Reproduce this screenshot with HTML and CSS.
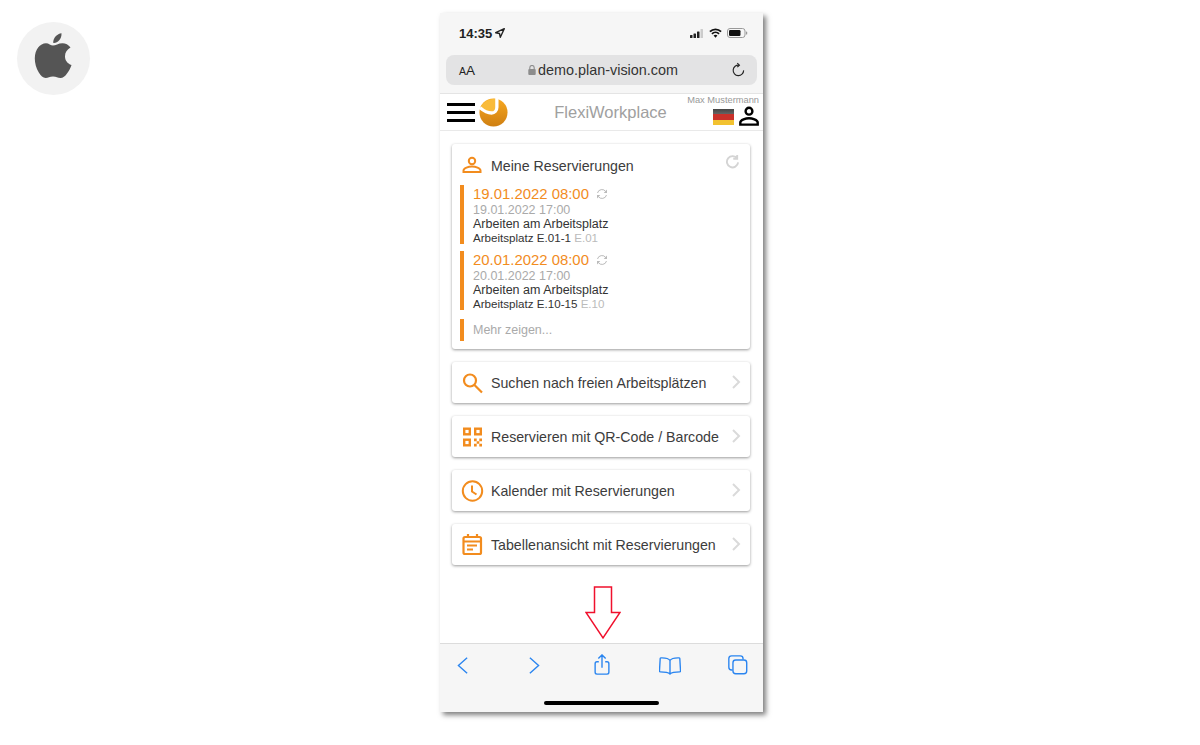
FILE: index.html
```html
<!DOCTYPE html>
<html lang="de">
<head>
  <meta charset="UTF-8">
  <title>FlexiWorkplace</title>
  <link rel="stylesheet" href="styles.css">
</head>
<body>

  <!-- Plattform-Logo links oben -->
  <div class="platform">
    <div class="platform-badge">
      <svg class="apple" viewBox="0 0 38 47">
        <path d="M27.500 1.200C27.700 4 26.800 6.500 25 8.500 23.500 10.200 21.500 11.300 19.300 11 19 8.500 20 6 21.700 4.200 23.200 2.600 25.500 1.500 27.500 1.200z"/>
        <path d="M19 13.500C21.500 13.500 24.500 11.200 28.500 11.200 31.500 11.200 34.500 12.600 36.500 15.500 33 17.600 31 20.500 31 24.200 31 28.400 33.300 31.400 37.500 33 36.500 36 35 39 33 41.500 31 44.300 29 46 26.500 46 23.500 46 22.500 44.500 19 44.500 15.500 44.500 14.300 46 11.700 46 9 46 6.800 43.500 4.800 40.500 2.200 36.500.8 31 .8 26.500.8 17.500 6 11.200 12 11.200 14.800 11.200 16.800 13.500 19 13.500z"/>
      </svg>
    </div>
  </div>

  <div class="phone">
    <!-- Safari oben -->
    <div class="browser-top">
      <div class="statusbar">
        <div class="status-time">
          14:35
          <svg class="status-arrow" viewBox="0 0 10 10"><path d="M9.300.7 5.300 9.300 4.500 5.500.7 4.700z"/></svg>
        </div>
        <div class="status-icons">
          <svg class="ic-signal" viewBox="0 0 14 9">
            <rect x="0" y="6" width="2.500" height="3" rx=".5"/>
            <rect x="3.500" y="4.500" width="2.500" height="4.500" rx=".5"/>
            <rect x="7" y="2.500" width="2.500" height="6.500" rx=".5"/>
            <rect class="off" x="10.500" y="0" width="2.500" height="9" rx=".5"/>
          </svg>
          <svg class="ic-wifi" viewBox="0 0 14 10">
            <path d="M1 3.600A8.500 8.500 0 0 1 13 3.600" />
            <path d="M3.200 5.900A5.400 5.400 0 0 1 10.800 5.900" />
            <path class="dot" d="M7 10 4.900 7.800a3 3 0 0 1 4.200 0z"/>
          </svg>
          <svg class="ic-battery" viewBox="0 0 21 10">
            <rect class="shell" x=".5" y=".5" width="17.500" height="9" rx="2.500"/>
            <rect x="2" y="2" width="11.500" height="6" rx="1.200"/>
            <rect class="cap" x="19" y="3.500" width="1.200" height="3" rx=".6"/>
          </svg>
        </div>
      </div>
      <div class="urlbar">
        <span class="url-aa"><small>A</small>A</span>
        <span class="url-host">
          <svg class="ic-lock" viewBox="0 0 8 10"><path d="M1.800 4V2.700a2.200 2.200 0 0 1 4.400 0V4" /><rect x=".3" y="4" width="7.400" height="6" rx="1"/></svg>
          demo.plan-vision.com
        </span>
        <svg class="ic-reload" viewBox="0 0 16 16">
          <path d="M8.600 2.800A5.600 5.600 0 1 0 13.500 8.400"/>
          <path d="M6.700.6 9 2.800 6.700 5"/>
        </svg>
      </div>
    </div>

    <!-- App-Kopfzeile -->
    <header class="appbar">
      <div class="burger"><span></span><span></span><span></span></div>
      <svg class="brand" viewBox="0 0 30 30">
        <defs>
          <linearGradient id="brandGrad" x1="0" y1="0" x2="0" y2="1">
            <stop offset="0" stop-color="#f7a81f"/>
            <stop offset="1" stop-color="#cf7f12"/>
          </linearGradient>
        </defs>
        <circle cx="15" cy="15" r="14.500" fill="url(#brandGrad)"/>
        <path d="M18.500.8V9.500C18.500 12.500 16 14.500 13.500 14.500 9 14.500 5 12 1.600 9.500 3.500 4.500 10 .2 18.500.8z" fill="#f9bb3a"/>
        <path d="M18.500 0V9.500C18.500 13 16 15.500 13 15.500 8.500 15.500 4.500 13 1 10" fill="none" stroke="#fff" stroke-width="3.400"/>
      </svg>
      <div class="appbar-title">FlexiWorkplace</div>
      <div class="appbar-user">
        <div class="user-name">Max Mustermann</div>
        <div class="user-icons">
          <div class="flag"></div>
          <svg class="ic-user" viewBox="0 0 20 20">
            <circle cx="10" cy="5.200" r="3.400"/>
            <path d="M1.300 18.600V16.500c0-2.900 5.800-4.300 8.700-4.300s8.700 1.400 8.700 4.300v2.100z"/>
          </svg>
        </div>
      </div>
    </header>

    <main class="content">
      <section class="card res-card">
        <div class="res-head">
          <svg class="card-icon ic-person" viewBox="0 0 24 24">
            <circle cx="12" cy="7" r="3.200"/>
            <path d="M3.500 18v-1.500c0-2.500 5-4 8.500-4s8.500 1.500 8.500 4V18z"/>
          </svg>
          <span class="res-title">Meine Reservierungen</span>
          <svg class="ic-refresh" viewBox="0 0 16 16">
            <path d="M13 1v4.200H8.800M13.100 5.100A6 6 0 1 0 14 9"/>
          </svg>
        </div>
        <div class="res-entry">
          <div class="res-start">19.01.2022 08:00
            <svg class="ic-repeat" viewBox="0 0 12 12"><path d="M1.500 5A4.600 4.600 0 0 1 9.800 3.600M10.500 7A4.600 4.600 0 0 1 2.200 8.400"/><path class="fill" d="M11 1.500V5H7.700zM1 10.500V7h3.300z"/></svg>
          </div>
          <div class="res-end">19.01.2022 17:00</div>
          <div class="res-text">Arbeiten am Arbeitsplatz</div>
          <div class="res-place">Arbeitsplatz E.01-1 <span>E.01</span></div>
        </div>
        <div class="res-entry">
          <div class="res-start">20.01.2022 08:00
            <svg class="ic-repeat" viewBox="0 0 12 12"><path d="M1.500 5A4.600 4.600 0 0 1 9.800 3.600M10.500 7A4.600 4.600 0 0 1 2.200 8.400"/><path class="fill" d="M11 1.500V5H7.700zM1 10.500V7h3.300z"/></svg>
          </div>
          <div class="res-end">20.01.2022 17:00</div>
          <div class="res-text">Arbeiten am Arbeitsplatz</div>
          <div class="res-place">Arbeitsplatz E.10-15 <span>E.10</span></div>
        </div>
        <div class="res-more">Mehr zeigen...</div>
      </section>

      <a class="card nav-card">
        <svg class="card-icon ic-search" viewBox="0 0 24 24"><circle cx="10" cy="9.500" r="6"/><path d="m14.500 14 7.500 7.500"/></svg>
        <span class="nav-label">Suchen nach freien Arbeitsplätzen</span>
        <svg class="chevron" viewBox="0 0 10 16"><path d="m2 2 6 6-6 6"/></svg>
      </a>
      <a class="card nav-card">
        <svg class="card-icon ic-qr" viewBox="0 0 24 24">
          <rect x="4.200" y="3.700" width="5.600" height="5.600"/>
          <rect x="15.200" y="3.700" width="5.600" height="5.600"/>
          <rect x="4.200" y="14.700" width="5.600" height="5.600"/>
          <path class="fill" d="M14 13.500h2.700v2.700H14zM19.300 13.500H22v2.700h-2.700zM16.700 16.200h2.600v2.600h-2.600zM14 18.800h2.700v2.700H14zM19.300 18.800H22v2.700h-2.700z"/>
        </svg>
        <span class="nav-label">Reservieren mit QR-Code / Barcode</span>
        <svg class="chevron" viewBox="0 0 10 16"><path d="m2 2 6 6-6 6"/></svg>
      </a>
      <a class="card nav-card">
        <svg class="card-icon ic-clock" viewBox="0 0 24 24"><circle cx="12.500" cy="12" r="9.700"/><path d="M12 6.500v6l4.500 3"/></svg>
        <span class="nav-label">Kalender mit Reservierungen</span>
        <svg class="chevron" viewBox="0 0 10 16"><path d="m2 2 6 6-6 6"/></svg>
      </a>
      <a class="card nav-card">
        <svg class="card-icon ic-table" viewBox="0 0 24 24">
          <rect x="3.500" y="4" width="17.500" height="17" rx="1.500"/>
          <path d="M3.500 8.500h17.500M8 1v4M17 1v4M7 12.500h10M7 16.500h6"/>
        </svg>
        <span class="nav-label">Tabellenansicht mit Reservierungen</span>
        <svg class="chevron" viewBox="0 0 10 16"><path d="m2 2 6 6-6 6"/></svg>
      </a>

      <!-- roter Hinweispfeil -->
      <svg class="hint-arrow" viewBox="0 0 36 54">
        <path d="M9.500 1h17v25.500h8.500L18 52 1 26.500h8.500z"/>
      </svg>
    </main>

    <!-- Safari unten -->
    <footer class="browser-bottom">
      <div class="tools">
        <svg class="tool" viewBox="0 0 24 24"><path d="M16.500 4 7 12.500l9.500 8.500"/></svg>
        <svg class="tool" viewBox="0 0 24 24"><path d="m7.500 4 9.500 8.500-9.500 8.500"/></svg>
        <svg class="tool" viewBox="0 0 24 24"><path d="M12 15V1.500M8 5l4-4 4 4M8.500 8.500H6.500a2 2 0 0 0-2 2V20a2 2 0 0 0 2 2h11a2 2 0 0 0 2-2v-9.500a2 2 0 0 0-2-2h-2"/></svg>
        <svg class="tool" viewBox="0 0 24 24"><path d="M12 7C10.500 4.800 7 4 2 4.200 1.500 4.300 1.300 4.500 1.300 5l-.8 13.800c0 .4.300.7.800.7 4.500 0 8.500.2 10.700 2.300 2.200-2.100 6.200-2.300 10.700-2.300.5 0 .8-.3.800-.7L22.700 5c0-.5-.2-.7-.7-.8C17 4 13.500 4.800 12 7zM12 7v15"/></svg>
        <svg class="tool" viewBox="0 0 24 24"><rect x="6.500" y="6.500" width="15" height="15" rx="3"/><path d="M6 17.500H5a3 3 0 0 1-3-3V5a3 3 0 0 1 3-3h9.500a3 3 0 0 1 3 3v1"/></svg>
      </div>
      <div class="home-bar"></div>
    </footer>
  </div>

</body>
</html>
```

FILE: styles.css
```css
html, body {
  margin: 0;
  padding: 0;
  background: #fff;
  font-family: "Liberation Sans", Arial, sans-serif;
  color: #333;
}

body {
  display: flex;
  height: 745px;
  overflow: hidden;
  box-sizing: border-box;
  padding-top: 13px;
}

svg {
  display: block;
  flex: none;
}

/* Plattform-Logo */
.platform {
  width: 440px;
  padding: 9px 0 0 17px;
  box-sizing: border-box;
}
.platform-badge {
  width: 73px;
  height: 73px;
  border-radius: 50%;
  background: #f2f2f2;
  display: flex;
  align-items: center;
  justify-content: center;
}
.apple {
  width: 38px;
  height: 47px;
  fill: #555;
  margin: -6px 1px 0 0;
}

/* Telefon */
.phone {
  width: 323px;
  height: 699px;
  display: flex;
  flex-direction: column;
  background: #fff;
  box-shadow: 3px 3px 5px rgba(0, 0, 0, 0.5);
}

.browser-top {
  height: 80px;
  background: #f6f6f6;
  border-bottom: 1px solid #e4e4e4;
  flex: none;
}
.statusbar {
  height: 40px;
  margin-bottom: 2px;
  display: flex;
  align-items: center;
  justify-content: space-between;
  padding: 0 15px 0 19px;
}
.status-time {
  display: flex;
  align-items: center;
  gap: 3px;
  font-size: 13px;
  font-weight: bold;
  color: #222;
}
.status-arrow {
  width: 10px;
  height: 10px;
  fill: none;
  stroke: #222;
  stroke-width: 1.400;
  stroke-linejoin: round;
}
.status-icons {
  display: flex;
  align-items: center;
  gap: 5px;
}
.ic-signal {
  width: 14px;
  height: 9px;
  fill: #222;
}
.ic-signal .off {
  fill: #ccc;
}
.ic-wifi {
  width: 13px;
  height: 10px;
  fill: none;
  stroke: #111;
  stroke-width: 2;
}
.ic-wifi .dot {
  fill: #111;
  stroke: none;
}
.ic-battery {
  width: 21px;
  height: 10px;
  fill: #111;
}
.ic-battery .shell {
  fill: none;
  stroke: #999;
}
.ic-battery .cap {
  fill: #999;
}

.urlbar {
  margin: 0 6px;
  height: 30px;
  border-radius: 8px;
  background: #e3e3e4;
  display: flex;
  align-items: center;
  justify-content: space-between;
  padding: 0 11px 0 13px;
}
.url-aa {
  font-size: 13.500px;
  color: #222;
}
.url-aa small {
  font-size: 10.500px;
}
.url-host {
  display: flex;
  align-items: center;
  gap: 2px;
  font-size: 14.400px;
  color: #333;
}
.ic-lock {
  width: 8px;
  height: 10px;
  fill: #8c8c8c;
  stroke: #8c8c8c;
  stroke-width: 0;
}
.ic-lock path {
  fill: none;
  stroke-width: 1.100;
}
.ic-reload {
  width: 15px;
  height: 16px;
  fill: none;
  stroke: #222;
  stroke-width: 1.200;
}

/* App-Kopfzeile */
.appbar {
  height: 36px;
  flex: none;
  border-bottom: 1px solid #e9e9e9;
  display: flex;
  align-items: center;
  padding: 0 4px 0 7px;
}
.burger {
  width: 28px;
  display: flex;
  flex-direction: column;
  gap: 5px;
}
.burger span {
  height: 3px;
  background: #000;
}
.brand {
  width: 29px;
  height: 29px;
  margin: 1px 0 0 4px;
}
.appbar-title {
  flex: 1;
  text-align: center;
  font-size: 16.500px;
  color: #a0a0a0;
  padding-left: 26px;
  white-space: nowrap;
}
.appbar-user {
  width: 72px;
  align-self: flex-start;
  text-align: right;
  padding-top: 1px;
}
.user-name {
  font-size: 9.300px;
  line-height: 11px;
  color: #999;
  white-space: nowrap;
}
.user-icons {
  display: flex;
  justify-content: flex-end;
  align-items: center;
  gap: 5px;
}
.flag {
  width: 21px;
  height: 16px;
  margin-top: 2px;
  background: linear-gradient(#444 0, #666 33%, #c8312a 33% 66%, #f2c230 66%);
}
.ic-user {
  width: 20px;
  height: 20px;
  fill: none;
  stroke: #000;
  stroke-width: 2.400;
}

/* Inhalt */
.content {
  flex: 1;
  position: relative;
  padding: 13px 13px 0 12px;
  display: flex;
  flex-direction: column;
  gap: 13px;
}
.card {
  background: #fff;
  border-radius: 3px;
  box-shadow: 0 1px 3px rgba(0, 0, 0, 0.4);
}
.card-icon {
  width: 24px;
  height: 24px;
  fill: none;
  stroke: #f28c1e;
  stroke-width: 2;
}

.res-card {
  height: 205px;
  box-sizing: border-box;
  padding: 10px 8px 8px;
  display: flex;
  flex-direction: column;
}
.res-head {
  display: flex;
  align-items: center;
  height: 23px;
  margin-bottom: 8px;
}
.res-title {
  font-size: 14.200px;
  color: #3c3c3c;
  margin-left: 7px;
  flex: 1;
}
.ic-refresh {
  width: 15px;
  height: 15px;
  fill: none;
  stroke: #d4d4d4;
  stroke-width: 2;
  margin: -8px 2px 0 0;
}
.res-entry {
  border-left: 4px solid #f28c1e;
  padding-left: 9px;
  height: 59px;
  margin-bottom: 7px;
  font-size: 11.600px;
  line-height: 13px;
}
.res-start {
  font-size: 14.900px;
  line-height: 18px;
  color: #f28c1e;
  display: flex;
  align-items: center;
  gap: 7px;
}
.ic-repeat {
  width: 12px;
  height: 12px;
  fill: none;
  stroke: #bbb;
  stroke-width: 1;
}
.ic-repeat .fill {
  fill: #bbb;
  stroke: none;
}
.res-end {
  font-size: 12.500px;
  line-height: 13px;
  margin-top: 1px;
  color: #aaa;
}
.res-text {
  font-size: 12.500px;
  line-height: 15px;
  color: #333;
}
.res-place {
  color: #333;
  margin-top: -1px;
}
.res-place span {
  color: #bbb;
}
.res-more {
  border-left: 4px solid #f28c1e;
  padding-left: 9px;
  margin-top: 2px;
  height: 22px;
  line-height: 23px;
  font-size: 12.500px;
  color: #aaa;
}

.nav-card {
  height: 41px;
  flex: none;
  display: flex;
  align-items: center;
  padding: 0 9px 0 8px;
}
.nav-label {
  flex: 1;
  font-size: 14.200px;
  color: #3c3c3c;
  margin-left: 7px;
  white-space: nowrap;
}
.chevron {
  width: 10px;
  height: 16px;
  margin-top: -2px;
  fill: none;
  stroke: #dadada;
  stroke-width: 2;
}
.ic-search {
  stroke-width: 2.200;
}
.ic-qr {
  stroke-width: 2.400;
}
.ic-qr .fill {
  fill: #f28c1e;
  stroke: none;
}
.ic-table {
  stroke-width: 2.200;
}

/* Pfeil liegt über dem Inhalt */
.hint-arrow {
  position: absolute;
  left: 145px;
  top: 455px;
  width: 36px;
  height: 54px;
  fill: #fff;
  stroke: #f0102d;
  stroke-width: 1.500;
}

/* Safari unten */
.browser-bottom {
  height: 69px;
  flex: none;
  box-sizing: border-box;
  background: #f6f6f6;
  border-top: 1px solid #dcdcdc;
  display: flex;
  flex-direction: column;
  align-items: center;
}
.tools {
  width: 100%;
  box-sizing: border-box;
  display: grid;
  grid-template-columns: 71px 68px 68px 68px 22px;
  padding: 10px 0 0 12px;
}
.tool {
  width: 22px;
  height: 22px;
  fill: none;
  stroke: #2a85f0;
  stroke-width: 1.500;
}
.home-bar {
  width: 115px;
  height: 4px;
  border-radius: 2px;
  background: #000;
  margin-top: 25px;
}
```
